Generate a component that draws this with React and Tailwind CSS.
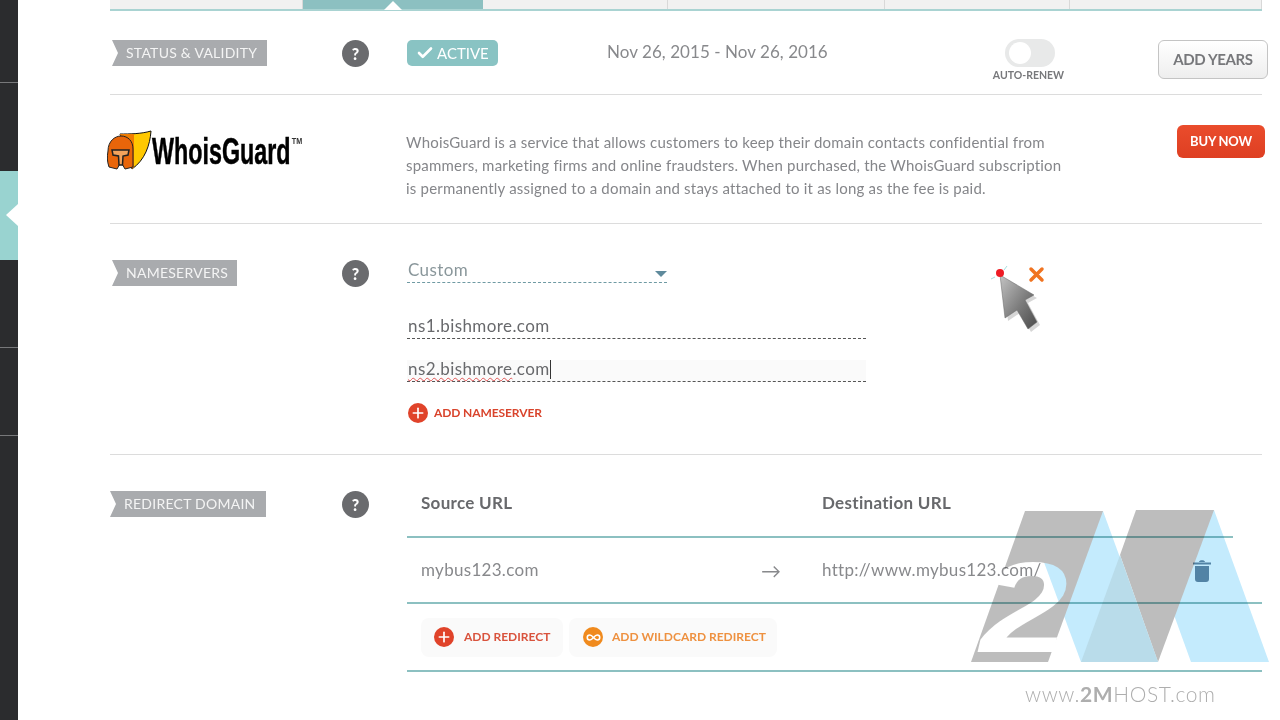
import React from "react";
import { Check, Infinity as InfinityIcon, Plus } from "lucide-react";

const tabs = [
  { w: "w-[193px]", active: false },
  { w: "w-[180px]", active: true },
  { w: "w-[185px]", active: false },
  { w: "w-[217px]", active: false },
  { w: "w-[185px]", active: false },
  { w: "w-[192px]", active: false },
];

const sideItems = [
  "h-[83px] bg-[#2b2c2e] border-b border-[#77787a]",
  "h-[88px] bg-[#2b2c2e]",
  "h-[89px] bg-[#99d3d0]",
  "h-[88px] bg-[#2b2c2e] border-b border-[#77787a]",
  "h-[88px] bg-[#2b2c2e] border-b border-[#77787a]",
  "flex-1 bg-[#2b2c2e]",
];

const Tag = ({ children, className = "" }) => (
  <div
    className={`h-[26px] flex items-center pl-[14px] pb-[2px] bg-[#a9abae] text-[#f4f4f4] text-[14px] tracking-[0.25px] uppercase whitespace-nowrap [clip-path:polygon(0_0,100%_0,100%_100%,0_100%,6px_50%)] ${className}`}
  >
    {children}
  </div>
);

const Help = () => (
  <div className="w-[27px] h-[27px] rounded-full bg-[#6a6b6e] text-white text-[16px] font-black flex items-center justify-center">
    ?
  </div>
);

const RoundIcon = ({ color, children }) => (
  <span className={`w-[20px] h-[20px] rounded-full flex items-center justify-center text-white ${color}`}>
    {children}
  </span>
);

const WhoisLogo = () => (
  <svg width="196" height="44" viewBox="0 0 196 44" className="ml-[-3px]">
    <path d="M13 5 C22 5 34 5 44 2 C43 16 38 31 25 40 Z" fill="#ffc800" stroke="#111" strokeWidth="1" />
    <path d="M13 5 C18 5 22 5 27 5 L27 38 L25 40 Z" fill="#f07c00" />
    <path d="M1 22 C1 12 8 7 14 7 C21 7 26 12 26 20 L26 38 L18 40 L14 33 L10 40 L2 38 C0 32 0 28 1 22 Z" fill="#e8650a" stroke="#222" strokeWidth="1" />
    <path d="M5 21 H22 L21 26 L16 27 L15.500 36 H12 L11.500 27 L6 26 Z" fill="#f3a35c" stroke="#222" strokeWidth="1.500" />
    <text
      transform="scale(0.63 1)"
      x="71.500"
      y="35"
      fontFamily="Liberation Sans"
      fontWeight="700"
      fontSize="37"
      fill="#000"
      stroke="#000"
      strokeWidth="0.500"
    >
      WhoisGuard
    </text>
    <text transform="scale(0.8 1)" x="231" y="15" fontFamily="Liberation Sans" fontWeight="700" fontSize="9" fill="#333">
      TM
    </text>
  </svg>
);

const Cursor = () => (
  <svg width="60" height="72" viewBox="0 0 60 72" className="absolute left-[985px] top-[262px]">
    <defs>
      <linearGradient id="arrowFill" x1="0" y1="0" x2="1" y2="1">
        <stop offset="0" stopColor="#c4c4c4" />
        <stop offset="0.55" stopColor="#7c7c7c" />
        <stop offset="1" stopColor="#4a4a4a" />
      </linearGradient>
    </defs>
    <path d="M18 17 L52 36 L43 41 L55 63 L46 70 L35 51 L23 59 Z" fill="#000" opacity="0.16" />
    <path d="M15 13 L49 33 L40 38 L52 60 L43 67 L32 48 L20 56 Z" fill="url(#arrowFill)" stroke="#666" strokeWidth="0.500" />
    <path d="M19 8 L22 4 M10 15 L6 17" stroke="#a5dfe0" strokeWidth="1" />
    <circle cx="15" cy="11" r="4" fill="#ee1c25" />
    <path d="M46 7 L57 18 M57 7 L46 18" stroke="#f07320" strokeWidth="3.500" strokeLinecap="round" />
  </svg>
);

const Watermark = () => (
  <div className="absolute left-[960px] top-[500px] mix-blend-multiply">
    <svg width="320" height="170" viewBox="960 500 320 170" className="block">
      <defs>
        <mask id="twoHole" maskUnits="userSpaceOnUse" x="960" y="500" width="320" height="170">
          <rect x="960" y="500" width="320" height="170" fill="#fff" />
          <text
            x="980"
            y="652"
            fontFamily="Liberation Sans"
            fontWeight="700"
            fontStyle="italic"
            fontSize="128"
            fill="#000"
            textLength="88"
            lengthAdjust="spacingAndGlyphs"
          >
            2
          </text>
        </mask>
      </defs>
      <polygon points="1025,511 1103,511 1158,662 1081,662" fill="#c4ebfd" />
      <polygon points="1136,510 1214,510 1269,662 1191,662" fill="#c4ebfd" />
      <polygon points="1025,511 1103,511 1048,662 971,662" fill="#bdbdbd" mask="url(#twoHole)" />
      <polygon points="1136,510 1214,510 1158,662 1120,555" fill="#bdbdbd" />
      <polygon points="1120,555 1081,662 1158,662" fill="#b9dcea" />
    </svg>
  </div>
);

export default function App() {
  return (
    <div className="relative flex h-[720px] overflow-hidden bg-white font-['Lato','Noto_Sans',sans-serif] text-[#77787b]">
      {/* left rail */}
      <aside className="w-[18px] h-full flex flex-col shrink-0">
        {sideItems.map((c, i) => (
          <div key={i} className={`relative ${c}`}>
            {i === 2 && (
              <span className="absolute left-[6px] top-[33px] w-0 h-0 border-y-[11px] border-y-transparent border-r-[12px] border-r-white" />
            )}
          </div>
        ))}
      </aside>

      <main className="ml-[92px] w-[1152px] shrink-0">
        {/* tab strip */}
        <div className="relative flex h-[11px] border-b-2 border-[#a9d3d2]">
          {tabs.map((t, i) => (
            <div
              key={i}
              className={`${t.w} ${t.active ? "bg-[#8cc0c1]" : "bg-[#f1f1f1] border-r border-[#d8d8d8]"}`}
            />
          ))}
          <span className="absolute left-[274px] top-[1px] w-0 h-0 border-x-[9px] border-x-transparent border-b-[9px] border-b-white" />
        </div>

        {/* status */}
        <section className="h-[84px] pt-[29px] flex border-b border-[#dcdcdc]">
          <div className="w-[232px] shrink-0">
            <Tag className="ml-[2px] w-[155px]">Status &amp; Validity</Tag>
          </div>
          <div className="w-[65px] shrink-0"><Help /></div>
          <div className="w-[200px] shrink-0">
            <div className="w-[91px] h-[26px] rounded-[5px] bg-[#89c3c3] text-white text-[15px] flex items-center gap-[3px] pl-[9px]">
              <Check size={18} strokeWidth={3.5} />
              ACTIVE
            </div>
          </div>
          <div className="w-[386px] shrink-0 text-[17px] tracking-[0.05px] leading-[24px] text-[#88898c]">
            Nov 26, 2015 - Nov 26, 2016
          </div>
          <div className="w-[71px] shrink-0 flex flex-col items-center">
            <div className="w-[50px] h-[28px] mt-[-1px] ml-[2px] rounded-full bg-[#e8e9e9] pl-[4px] pt-[3px]">
              <div className="w-[22px] h-[22px] rounded-full bg-white" />
            </div>
            <span className="mt-[1px] text-[10.5px] font-bold whitespace-nowrap text-[#77787b]">AUTO-RENEW</span>
          </div>
          <button className="ml-[94px] shrink-0 w-[110px] h-[39px] rounded-[6px] border border-[#c4c4c4] bg-gradient-to-b from-white to-[#eeeeee] text-[15px] tracking-[-0.4px] font-bold text-[#77787b]">
            ADD YEARS
          </button>
        </section>

        {/* whoisguard */}
        <section className="h-[129px] flex border-b border-[#dcdcdc]">
          <div className="w-[296px] shrink-0 pt-[34px]"><WhoisLogo /></div>
          <p className="w-[660px] shrink-0 pt-[36px] text-[15px] tracking-[0.2px] leading-[23px] text-[#85868a]">
            WhoisGuard is a service that allows customers to keep their domain contacts confidential from spammers, marketing firms and online fraudsters. When purchased, the WhoisGuard subscription is permanently assigned to a domain and stays attached to it as long as the fee is paid.
          </p>
          <div className="pt-[30px] shrink-0">
            <button className="ml-[111px] w-[88px] h-[33px] rounded-[6px] bg-gradient-to-b from-[#ea4c2c] to-[#de3f22] text-white text-[13px] tracking-[-0.2px] font-bold">
              BUY NOW
            </button>
          </div>
        </section>

        {/* nameservers */}
        <section className="h-[231px] pt-[36px] flex border-b border-[#dcdcdc]">
          <div className="w-[232px] shrink-0">
            <Tag className="ml-[2px] w-[125px]">Nameservers</Tag>
          </div>
          <div className="w-[65px] shrink-0"><Help /></div>
          <div className="flex-1">
            <div className="w-[260px] h-[23px] flex items-start justify-between border-b border-dashed border-[#6f9aa3] pl-[1px] text-[17px] tracking-[0.4px] leading-[20px] text-[#8a979b]">
              Custom
              <span className="mt-[11px] w-0 h-0 border-x-[6px] border-x-transparent border-t-[6px] border-t-[#5f8a9c]" />
            </div>
            <div className="mt-[31px] w-[459px] h-[25px] border-b border-dashed border-[#555] pl-[1px] text-[17px] tracking-[0.4px] leading-[23px] text-[#68696c]">
              ns1.bishmore.com
            </div>
            <div className="mt-[21px] w-[459px] h-[22px] bg-[#fafafa] border-b border-dashed border-[#555] pl-[1px] text-[17px] tracking-[0.4px] leading-[18px] text-[#68696c] flex">
              <span className="underline decoration-wavy decoration-[#e25555] decoration-1 underline-offset-2">ns2.bishmore</span>
              <span>.com</span>
              <span className="w-px h-[19px] bg-[#333]" />
            </div>
            <div className="mt-[21px] ml-px flex items-center gap-[6px] text-[12px] tracking-[-0.1px] font-bold text-[#d9442c]">
              <RoundIcon color="bg-[#e0432a]"><Plus size={16} strokeWidth={2.500} /></RoundIcon>
              ADD NAMESERVER
            </div>
          </div>
        </section>

        {/* redirect domain */}
        <section className="pt-[36px] flex">
          <div className="w-[232px] shrink-0">
            <Tag className="w-[156px]">Redirect Domain</Tag>
          </div>
          <div className="w-[65px] shrink-0"><Help /></div>
          <div className="w-[855px] shrink-0 mt-[-36px]">
            <div className="w-[826px] h-[83px] border-b-2 border-[#8cc0c1] flex items-center pl-[14px] pt-[14px] text-[17px] tracking-[0.3px] font-bold text-[#68696c]">
              <span className="w-[401px]">Source URL</span>
              <span>Destination URL</span>
            </div>
            <div className="h-[66px] border-b-2 border-[#8cc0c1] flex items-center pl-[14px] text-[17px] tracking-[0.3px] text-[#88898c]">
              <span className="w-[340px]">mybus123.com</span>
              <span className="w-[61px] text-[20px]">→</span>
              <span className="w-[370px]">http://www.mybus123.com/</span>
              <svg width="20" height="24" viewBox="0 0 20 24" className="text-[#6b8ea6]">
                <path d="M1 4.500 H19 V6.500 H1 Z M7 4 C7 1.500 13 1.500 13 4 Z M3 8 H17 V21 C17 23 16 24 14 24 H6 C4 24 3 23 3 21 Z" fill="currentColor" />
              </svg>
            </div>
            <div className="h-[68px] border-b-2 border-[#8cc0c1] flex items-center gap-[6px] pl-[14px] text-[12px] font-bold">
              <div className="w-[142px] h-[39px] rounded-[8px] bg-[#fafafa] flex items-center gap-[10px] pl-[13px] text-[#d9533d]">
                <RoundIcon color="bg-[#e0432a]"><Plus size={16} strokeWidth={2.500} /></RoundIcon>
                ADD REDIRECT
              </div>
              <div className="w-[208px] h-[39px] rounded-[8px] bg-[#fafafa] flex items-center gap-[9px] pl-[14px] text-[#ee9140]">
                <RoundIcon color="bg-[#f08a1d]"><InfinityIcon size={15} strokeWidth={2.500} /></RoundIcon>
                ADD WILDCARD REDIRECT
              </div>
            </div>
          </div>
        </section>
      </main>

      <Cursor />
      <Watermark />
      <div className="absolute left-[1025px] top-[682px] text-[21px] leading-[24px] font-light tracking-[0.6px] text-[#aeaeae] whitespace-nowrap">
        www.<span className="font-bold">2M</span>HOST.com
      </div>
    </div>
  );
}
